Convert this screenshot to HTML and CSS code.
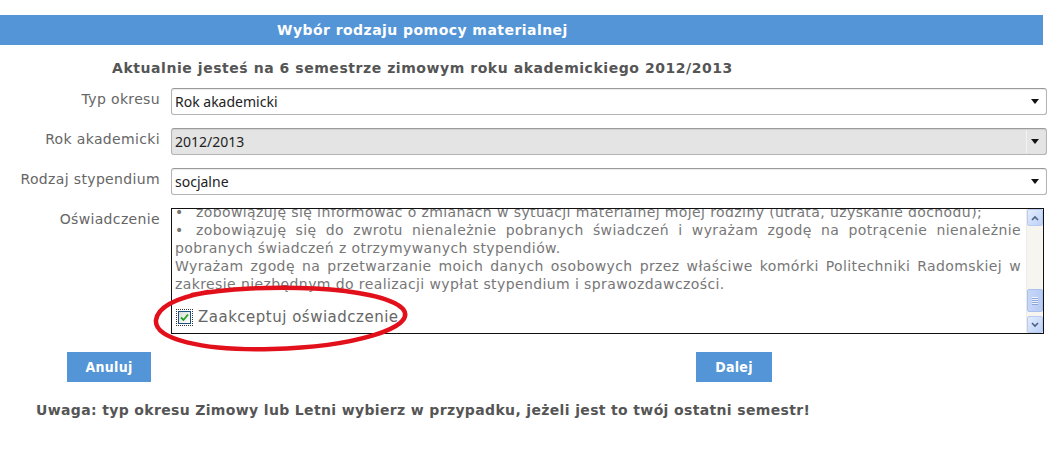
FILE: index.html
```html
<!DOCTYPE html>
<html lang="pl">
<head>
  <meta charset="UTF-8" />
  <title>Wybór rodzaju pomocy materialnej</title>
  <link rel="stylesheet" href="styles.css">
</head>
<body>

  <div class="panel-title">Wybór rodzaju pomocy materialnej</div>

  <div class="content">
    <p class="semester">Aktualnie jesteś na 6 semestrze zimowym roku akademickiego 2012/2013</p>

    <div class="form">
      <label class="form-label">Typ okresu</label>
      <div class="select">
        <select>
          <option>Rok akademicki</option>
          <option>Zimowy</option>
          <option>Letni</option>
        </select>
      </div>

      <label class="form-label">Rok akademicki</label>
      <div class="select disabled">
        <select disabled>
          <option>2012/2013</option>
        </select>
      </div>

      <label class="form-label">Rodzaj stypendium</label>
      <div class="select">
        <select>
          <option>socjalne</option>
        </select>
      </div>

      <label class="form-label">Oświadczenie</label>
      <div class="statement-wrap">
        <div class="statement">
          <div class="statement-text">
            <p>Oświadczam, że:</p>
            <p><span class="bullet">•</span>zapoznałem/am się z Regulaminem ustalania wysokości, przyznawania i wypłacania świadczeń pomocy materialnej dla studentów Politechniki Radomskiej;</p>
            <p><span class="bullet">•</span>dane zawarte we wniosku są zgodne ze stanem faktycznym;</p>
            <p><span class="bullet">•</span>zobowiązuję się informować o zmianach w sytuacji materialnej mojej rodziny (utrata, uzyskanie dochodu);</p>
            <p><span class="bullet">•</span>zobowiązuję się do zwrotu nienależnie pobranych świadczeń i wyrażam zgodę na potrącenie nienależnie pobranych świadczeń z otrzymywanych stypendiów.</p>
            <p>Wyrażam zgodę na przetwarzanie moich danych osobowych przez właściwe komórki Politechniki Radomskiej w zakresie niezbędnym do realizacji wypłat stypendium i sprawozdawczości.</p>
            <label class="accept">
              <span class="checkbox">
                <svg width="9" height="9" viewBox="0 0 9 9"><path d="M1 4.5 L3.5 7 L8 1.5" fill="none" stroke="#21a121" stroke-width="1.8"/></svg>
              </span>
              Zaakceptuj oświadczenie
            </label>
          </div>
          <div class="scrollbar">
            <div class="scroll-btn">
              <svg width="8" height="6" viewBox="0 0 8 6"><path d="M1 5 L4 2 L7 5" fill="none" stroke="#4d6185" stroke-width="1.6"/></svg>
            </div>
            <div class="scroll-track">
              <div class="scroll-thumb"><span></span><span></span><span></span><span></span></div>
            </div>
            <div class="scroll-btn">
              <svg width="8" height="6" viewBox="0 0 8 6"><path d="M1 1 L4 4 L7 1" fill="none" stroke="#4d6185" stroke-width="1.6"/></svg>
            </div>
          </div>
        </div>
        <!-- hand-drawn marker over the checkbox -->
        <svg class="marker" width="270" height="72" viewBox="0 0 270 72">
          <path d="M42 11 C 110 -2, 231 2, 253 25 C 268 44, 202 63, 122 65 C 52 67, 4 55, 6 36 C 8 22, 30 13, 58 8" fill="none" stroke="#e2101b" stroke-width="4.5" stroke-linecap="round"/>
        </svg>
      </div>
    </div>

    <div class="actions">
      <button class="btn btn-cancel">Anuluj</button>
      <button class="btn btn-next">Dalej</button>
    </div>

    <p class="note">Uwaga: typ okresu Zimowy lub Letni wybierz w przypadku, jeżeli jest to twój ostatni semestr!</p>
  </div>

</body>
</html>
```

FILE: styles.css
```css
* {
  box-sizing: border-box;
  margin: 0;
  padding: 0;
}

body {
  font-family: 'DejaVu Sans', Verdana, sans-serif;
  font-size: 14px;
  letter-spacing: 0.35px;
  color: #666;
  background: #fff;
  padding-top: 15px;
}

.panel-title {
  width: 1043px;
  height: 30px;
  line-height: 30px;
  padding-left: 277px;
  background-color: #5395d7;
  color: #fff;
  font-weight: bold;
  letter-spacing: 0.45px;
}

.content {
  width: 1047px;
}

.semester {
  width: 845px;
  margin-top: 14px;
  text-align: center;
  font-weight: bold;
  color: #555;
  line-height: 18px;
  letter-spacing: 0.55px;
}

/* Form */
.form {
  display: grid;
  grid-template-columns: 160px 876px;
  column-gap: 11px;
  row-gap: 13px;
  margin-top: 11px;
}

.form-label {
  text-align: right;
  padding-top: 3px;
  line-height: 16px;
  color: #666;
}

.select {
  position: relative;
  height: 27px;
}

.select select {
  appearance: none;
  -webkit-appearance: none;
  width: 100%;
  height: 27px;
  padding: 1px 3px 0;
  border: 1px solid #b3b3b3;
  border-top-color: #9a9a9a;
  border-radius: 3px;
  background: #fff;
  font-family: 'Noto Sans', 'Open Sans', sans-serif;
  font-size: 14px;
  line-height: 22px;
  color: #222;
  box-shadow: inset 0 1px 1px rgba(0, 0, 0, 0.08);
}

.select.disabled select {
  background: #e4e4e4;
  opacity: 1;
  color: #222;
}

.select::after {
  content: "";
  position: absolute;
  right: 8px;
  top: 11px;
  border-left: 4px solid transparent;
  border-right: 4px solid transparent;
  border-top: 5px solid #111;
  pointer-events: none;
}

.select.disabled::before {
  content: "";
  position: absolute;
  right: 20px;
  top: 2px;
  bottom: 2px;
  border-left: 1px solid #f3f3f3;
}

/* Statement box */
.statement-wrap {
  position: relative;
  width: 873px;
}

.statement {
  display: flex;
  height: 126px;
  border: 1px solid #111;
  background: #fff;
}

.statement-text {
  flex: 1;
  display: flex;
  flex-direction: column;
  justify-content: flex-end;
  overflow: hidden;
  padding: 0 5px 6px 3px;
  color: #777;
  line-height: 18px;
  letter-spacing: 0.4px;
}

.statement-text p {
  text-align: justify;
}

.bullet {
  display: inline-block;
  width: 21px;
}

.accept {
  display: flex;
  align-items: center;
  gap: 7px;
  margin-top: 14px;
  margin-left: 3px;
  font-size: 15px;
  letter-spacing: 0.5px;
  color: #666;
  line-height: 20px;
}

.checkbox {
  display: flex;
  align-items: center;
  justify-content: center;
  width: 13px;
  height: 13px;
  border: 1px solid #1c5180;
  background: linear-gradient(135deg, #dcdcd6, #fff);
  outline: 1px dotted #333;
  outline-offset: 1px;
}

/* XP style scrollbar */
.scrollbar {
  width: 17px;
  display: flex;
  flex-direction: column;
  background: #f6f5f0;
  border-left: 1px solid #eeede5;
}

.scroll-btn {
  height: 17px;
  display: flex;
  align-items: center;
  justify-content: center;
  background: linear-gradient(135deg, #e3ecfd, #bcd0f7);
  border: 1px solid #b9cbf2;
  border-radius: 2px;
}

.scroll-track {
  flex: 1;
  display: flex;
  flex-direction: column;
  justify-content: flex-end;
  padding-bottom: 4px;
}

.scroll-thumb {
  height: 23px;
  display: flex;
  flex-direction: column;
  align-items: center;
  justify-content: center;
  gap: 1px;
  background: linear-gradient(90deg, #c7d7f8, #b6cbf4);
  border: 1px solid #aac0ee;
  border-radius: 2px;
}

.scroll-thumb span {
  width: 6px;
  height: 1px;
  background: #eef3fd;
  box-shadow: 0 1px 0 #8ca6dc;
}

.marker {
  position: absolute;
  left: -21px;
  top: 76px;
  pointer-events: none;
}

/* Buttons */
.actions {
  display: flex;
  margin-top: 18px;
  padding-left: 67px;
}

.btn {
  height: 30px;
  border: none;
  background-color: #5395d7;
  color: #fff;
  font-family: 'DejaVu Sans Condensed', Tahoma, sans-serif;
  font-weight: bold;
  font-size: 14px;
  letter-spacing: 0.3px;
  cursor: pointer;
}

.btn-cancel {
  width: 84px;
}

.btn-next {
  width: 76px;
  margin-left: 545px;
}

.note {
  margin-top: 19px;
  padding-left: 36px;
  font-weight: bold;
  color: #555;
  line-height: 18px;
  letter-spacing: 0.35px;
}
```
